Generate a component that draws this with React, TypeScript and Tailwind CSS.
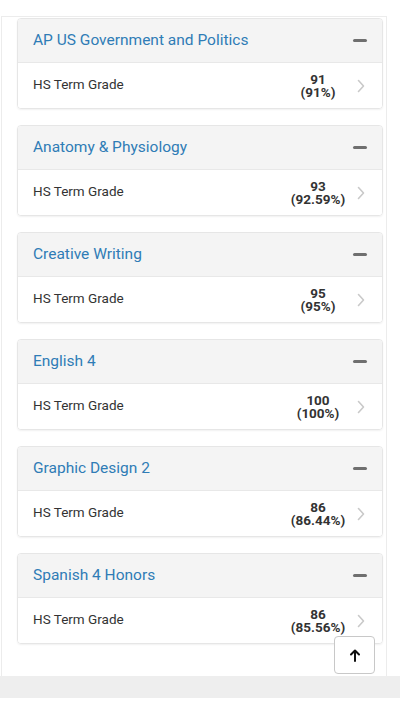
import React from 'react';

type Course = {
    name: string;
    grade: string;
    percent: string;
};

const courses: Course[] = [
    { name: "AP US Government and Politics", grade: "91", percent: "(91%)" },
    { name: "Anatomy & Physiology", grade: "93", percent: "(92.59%)" },
    { name: "Creative Writing", grade: "95", percent: "(95%)" },
    { name: "English 4", grade: "100", percent: "(100%)" },
    { name: "Graphic Design 2", grade: "86", percent: "(86.44%)" },
    { name: "Spanish 4 Honors", grade: "86", percent: "(85.56%)" },
];

const CourseCard: React.FC<{ course: Course }> = ({ course }) => {
    return (
        <div className="border border-[#e6e6e6] rounded-[4px] shadow-[0_1px_2px_rgba(0,0,0,0.06)] overflow-hidden">
            <div className="h-[44px] bg-[#f4f4f4] border-b border-[#e8e8e8] flex items-center justify-between pl-[15px] pr-[15px]">
                <span className="text-[15.5px] text-[#2f7cb6]">{course.name}</span>
                <span className="w-[14px] h-[3px] rounded-full bg-[#6f6f6f]"></span>
            </div>
            <div className="h-[45px] bg-white flex items-center pl-[15px] pr-[17px]">
                <span className="flex-1 text-[13.5px] text-[#333333] -mt-[2px]">HS Term Grade</span>
                <div className="w-[60px] flex flex-col items-center font-bold text-[13.5px] leading-[13px] text-[#333333]">
                    <span>{course.grade}</span>
                    <span>{course.percent}</span>
                </div>
                <svg className="w-[8px] h-[14px] ml-[9px]" viewBox="0 0 8 14" fill="none" stroke="#c9c9c9" strokeWidth="1.6" strokeLinecap="round" strokeLinejoin="round">
                    <path d="M1.5 1.5l5 5.5-5 5.5" />
                </svg>
            </div>
        </div>
    );
};

const App: React.FC = () => {
    return (
        <div className="w-[400px] h-[711px] bg-white overflow-hidden" style={{ fontFamily: 'Roboto, "Liberation Sans", sans-serif' }}>
            <div className="h-[16px]"></div>
            <div className="relative ml-[1px] w-[386px] bg-white border border-[#ececec] border-b-0 pl-[15px] pr-[3px] pt-[1px] pb-[32px] flex flex-col gap-[16px]">
                {courses.map((c) => (
                    <CourseCard key={c.name} course={c} />
                ))}
                <button className="absolute right-[11px] bottom-[2px] w-[41px] h-[38px] bg-white border border-[#c8c8c8] rounded-[4px] flex items-center justify-center">
                    <svg className="w-[12px] h-[13px]" viewBox="0 0 12 13" fill="none" stroke="#111" strokeWidth="2" strokeLinecap="round" strokeLinejoin="round">
                        <path d="M6 12V2M2 5.5L6 1.5l4 4" />
                    </svg>
                </button>
            </div>
            <div className="h-[22px] bg-[#eeeeee]"></div>
        </div>
    );
};

export default App;
